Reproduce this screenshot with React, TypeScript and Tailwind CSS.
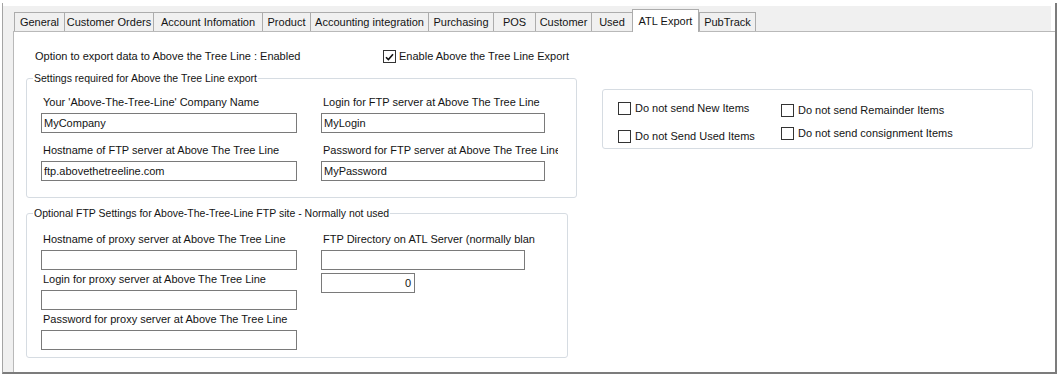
import React from "react";

type Tab = { label: string; w: string; active?: boolean; last?: boolean };

const TABS: Tab[] = [
	{ label: "General", w: "w-[50px]" },
	{ label: "Customer Orders", w: "w-[89px]" },
	{ label: "Account Infomation", w: "w-[109px]" },
	{ label: "Product", w: "w-[48px]" },
	{ label: "Accounting integration", w: "w-[118px]" },
	{ label: "Purchasing", w: "w-[65px]" },
	{ label: "POS", w: "w-[42px]" },
	{ label: "Customer", w: "w-[56px]" },
	{ label: "Used", w: "w-[41px]" },
	{ label: "ATL Export", w: "w-[67px]", active: true },
	{ label: "PubTrack", w: "w-[57px]", last: true },
];

function Check({ checked = false }: { checked?: boolean }) {
	return (
		<span className="flex h-[13px] w-[13px] shrink-0 items-center justify-center border border-[#333333] bg-white">
			{checked && (
				<svg width="9" height="8" viewBox="0 0 9 8">
					<path d="M1 4.2 L3.4 6.6 L8 1.2" stroke="#111" strokeWidth="1.6" fill="none" />
				</svg>
			)}
		</span>
	);
}

function TextBox({ value = "", w, right = false }: { value?: string; w: string; right?: boolean }) {
	return (
		<div
			className={`flex h-[20px] items-center border border-[#7a7a7a] bg-white ${w} ${right ? "justify-end pr-[3px]" : "pl-[2px]"}`}
		>
			{value}
		</div>
	);
}

// label sits 2px right of its box; some labels are clipped by their width, as in the form
function Field({
	label,
	value,
	w,
	labelW,
}: {
	label: string;
	value?: string;
	w: string;
	labelW?: string;
}) {
	return (
		<div className="flex flex-col">
			<span className={`h-[13px] overflow-hidden whitespace-nowrap pl-[2px] ${labelW ?? ""}`}>{label}</span>
			<div className="mt-[4px]">
				<TextBox value={value} w={w} />
			</div>
		</div>
	);
}

function Option({ label }: { label: string }) {
	return (
		<div className="flex h-[13px] items-center">
			<Check />
			<span className="ml-[4px] whitespace-nowrap">{label}</span>
		</div>
	);
}

export default function App() {
	return (
		<div className="h-[377px] w-[1058px] overflow-hidden bg-white font-['Liberation_Sans',Arial,sans-serif] text-[11px] leading-[13px] text-[#141414]">
			<div className="ml-[2px] mt-[3px] flex h-[371px] w-[1055px] flex-col border-b-2 border-l border-r-2 border-b-[#7c7c7c] border-l-[#a4a4a4] border-r-[#7c7c7c] bg-white pt-[3px]">
				{/* tab strip */}
				<div className="mr-[4px] flex h-[25px] items-end bg-[#f0f0f0] pl-[11px]">
					{TABS.map((t) =>
						t.active ? (
							<div
								key={t.label}
								className={`relative z-10 -mb-px flex h-[23px] items-center justify-center border-l border-r border-t border-[#acacac] bg-white ${t.w}`}
							>
								{t.label}
							</div>
						) : (
							<div
								key={t.label}
								className={`flex h-[19px] items-center justify-center border-l border-t border-[#acacac] bg-[#f0f0f0] ${t.last ? "border-r" : ""} ${t.w}`}
							>
								{t.label}
							</div>
						),
					)}
				</div>

				<div className="flex min-h-0 flex-1">
					<div className="w-[10px] bg-[#f0f0f0]" />
					<div className="flex-1 overflow-hidden border-l border-t border-[#b9b9b9] bg-white pt-[18px]">
						<div className="flex h-[13px] items-center pl-[21px]">
							<span className="w-[348px]">Option to export data to Above the Tree Line : Enabled</span>
							<Check checked />
							<span className="ml-[3px]">Enable Above the Tree Line Export</span>
						</div>

						<div className="mt-[9px] flex items-start pl-[12px]">
							<div className="flex flex-col">
								<fieldset className="w-[551px] rounded-[3px] border border-[#d6dce2]">
									<legend className="ml-[6px] px-px text-[10.5px] leading-[13px]">
										Settings required for Above the Tree Line export
									</legend>
									<div className="grid grid-cols-[256px_224px] gap-x-[24px] gap-y-[11px] pb-[16px] pl-[14px] pt-[11px]">
										<Field label="Your 'Above-The-Tree-Line' Company Name" value="MyCompany" w="w-[256px]" />
										<Field label="Login for FTP server at Above The Tree Line" value="MyLogin" w="w-[224px]" />
										<Field label="Hostname of FTP server at Above The Tree Line" value="ftp.abovethetreeline.com" w="w-[256px]" />
										<Field
											label="Password for FTP server at Above The Tree Line"
											value="MyPassword"
											w="w-[224px]"
											labelW="w-[237px]"
										/>
									</div>
								</fieldset>

								<fieldset className="mt-[9px] w-[542px] rounded-[3px] border border-[#d6dce2]">
									<legend className="ml-[6px] px-px text-[10.5px] leading-[13px]">
										Optional FTP Settings for Above-The-Tree-Line FTP site - Normally not used
									</legend>
									<div className="flex gap-x-[24px] pb-[7px] pl-[14px] pt-[13px]">
										<div className="flex w-[256px] flex-col gap-y-[3px]">
											<Field label="Hostname of proxy server at Above The Tree Line" w="w-[256px]" />
											<Field label="Login for proxy server at Above The Tree Line" w="w-[256px]" />
											<Field label="Password for proxy server at Above The Tree Line" w="w-[256px]" />
										</div>
										<div className="flex flex-col">
											<Field
												label="FTP Directory on ATL Server (normally blank)"
												w="w-[204px]"
												labelW="w-[214px]"
											/>
											<div className="mt-[3px]">
												<TextBox value="0" w="w-[94px]" right />
											</div>
										</div>
									</div>
								</fieldset>
							</div>

							<div className="ml-[25px] mt-[17px] flex h-[60px] w-[431px] rounded-[3px] border border-[#d6dce2] pl-[15px]">
								<div className="flex w-[163px] flex-col">
									<div className="mt-[12px]">
										<Option label="Do not send New Items" />
									</div>
									<div className="mt-[15px]">
										<Option label="Do not Send Used Items" />
									</div>
								</div>
								<div className="flex flex-col">
									<div className="mt-[14px]">
										<Option label="Do not send Remainder Items" />
									</div>
									<div className="mt-[10px]">
										<Option label="Do not send consignment Items" />
									</div>
								</div>
							</div>
						</div>
					</div>
				</div>
			</div>
		</div>
	);
}
